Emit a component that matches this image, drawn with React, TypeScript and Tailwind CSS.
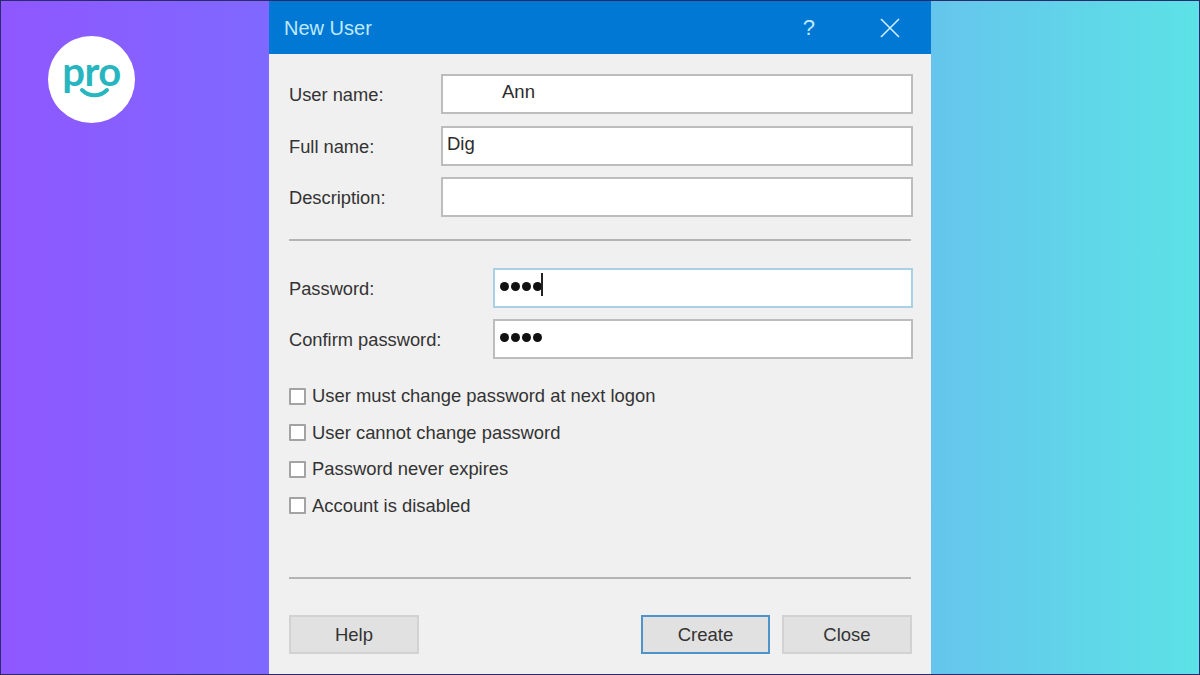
const font = "font-['Liberation_Sans',Arial,sans-serif]";

function Field({ label, labelWidth, focused, children }: { label: string; labelWidth: string; focused?: boolean; children?: React.ReactNode }) {
  return (
    <div className="flex items-center">
      <div className={`${labelWidth} shrink-0 pt-[2px] text-[18.3px] leading-none text-[#333]`}>{label}</div>
      <div className={`flex h-10 min-w-0 flex-1 items-center border-2 bg-white pb-1 text-[#2b2b2b] ${focused ? "border-[#a9d0e6]" : "border-[#bdbdbd]"}`}>
        {children}
      </div>
    </div>
  );
}

function Dots({ caret }: { caret?: boolean }) {
  return (
    <div className="flex items-center gap-[2px] pl-[5px]">
      {[0, 1, 2, 3].map((i) => (
        <span key={i} className="h-[9px] w-[9px] rounded-full bg-[#111]" />
      ))}
      {caret && <span className="-mt-1 ml-[-3px] h-[23px] w-[2px] bg-[#222]" />}
    </div>
  );
}

function Check({ label }: { label: string }) {
  return (
    <div className="flex h-[36.5px] items-center gap-[6px]">
      <span className="h-[17px] w-[17px] shrink-0 rounded-[1px] border-2 border-[#a3a3a3] bg-white" />
      <span className="text-[18.4px] leading-none text-[#333]">{label}</span>
    </div>
  );
}

function Btn({ label, primary, width }: { label: string; primary?: boolean; width: string }) {
  return (
    <button className={`h-[39px] ${width} border-2 bg-[#e1e1e1] text-[18.5px] text-[#333] ${primary ? "border-[#4f93c9]" : "border-[#d2d2d2]"}`}>
      {label}
    </button>
  );
}

export default function App() {
  return (
    <div className={`${font} relative flex h-[675px] w-[1200px] justify-center overflow-hidden border border-[#2c2a6b] bg-[linear-gradient(90deg,#8f57ff_0%,#7f68ff_22%,#6fa0f2_60%,#65c5ec_78%,#5ce2e6_100%)]`}>
      <div className="absolute left-[47px] top-[35px] flex h-[87px] w-[87px] items-start justify-center rounded-full bg-white">
        <span className="mt-[13px] font-['Lato',sans-serif] text-[40px] font-bold leading-[44px] tracking-[-0.5px] text-[#27b5c0]">pro</span>
        <svg className="absolute left-[31px] top-[51px]" width="32" height="14" viewBox="0 0 32 14" fill="none">
          <path d="M3 3 C10 10 21 10 28 3" stroke="#27b5c0" strokeWidth="4" strokeLinecap="round" />
        </svg>
      </div>

      <div className="flex w-[662px] flex-col bg-[#f0f0f0]">
        <div className="flex h-[53px] shrink-0 items-center bg-[#0078d4] pl-[15px] text-[20px] text-[#bfeaff]">
          <span className="flex-1">New User</span>
          <span className="mr-[65px] text-[22px] leading-none">?</span>
          <svg className="mr-[31px]" width="20" height="20" viewBox="0 0 20 20" fill="none">
            <path d="M1 1 L19 19 M19 1 L1 19" stroke="#cfefff" strokeWidth="1.6" />
          </svg>
        </div>

        <div className="flex flex-1 flex-col pl-5 pr-[18px] pt-5">
          <div className="flex flex-col gap-3">
            <Field label="User name:" labelWidth="w-[152px]"><span className="pl-[59px] text-[18.5px]">Ann</span></Field>
            <Field label="Full name:" labelWidth="w-[152px]"><span className="pl-1 text-[18.5px]">Dig</span></Field>
            <div className="mt-[-1px]"><Field label="Description:" labelWidth="w-[152px]" /></div>
          </div>
          <div className="mr-[2px] mt-[22px] h-[2px] bg-[#b4b4b4]" />
          <div className="mt-[27px] flex flex-col gap-[11px]">
            <Field label="Password:" labelWidth="w-[204px]" focused><Dots caret /></Field>
            <Field label="Confirm password:" labelWidth="w-[204px]"><Dots /></Field>
          </div>
          <div className="mt-[19px] flex flex-col">
            <Check label="User must change password at next logon" />
            <Check label="User cannot change password" />
            <Check label="Password never expires" />
            <Check label="Account is disabled" />
          </div>
          <div className="mr-[2px] mt-[53px] h-[2px] bg-[#b4b4b4]" />
          <div className="mt-9 flex">
            <Btn label="Help" width="w-[130px]" />
            <div className="ml-[222px] flex gap-3">
              <Btn label="Create" primary width="w-[129px]" />
              <Btn label="Close" width="w-[130px]" />
            </div>
          </div>
        </div>
      </div>
    </div>
  );
}
